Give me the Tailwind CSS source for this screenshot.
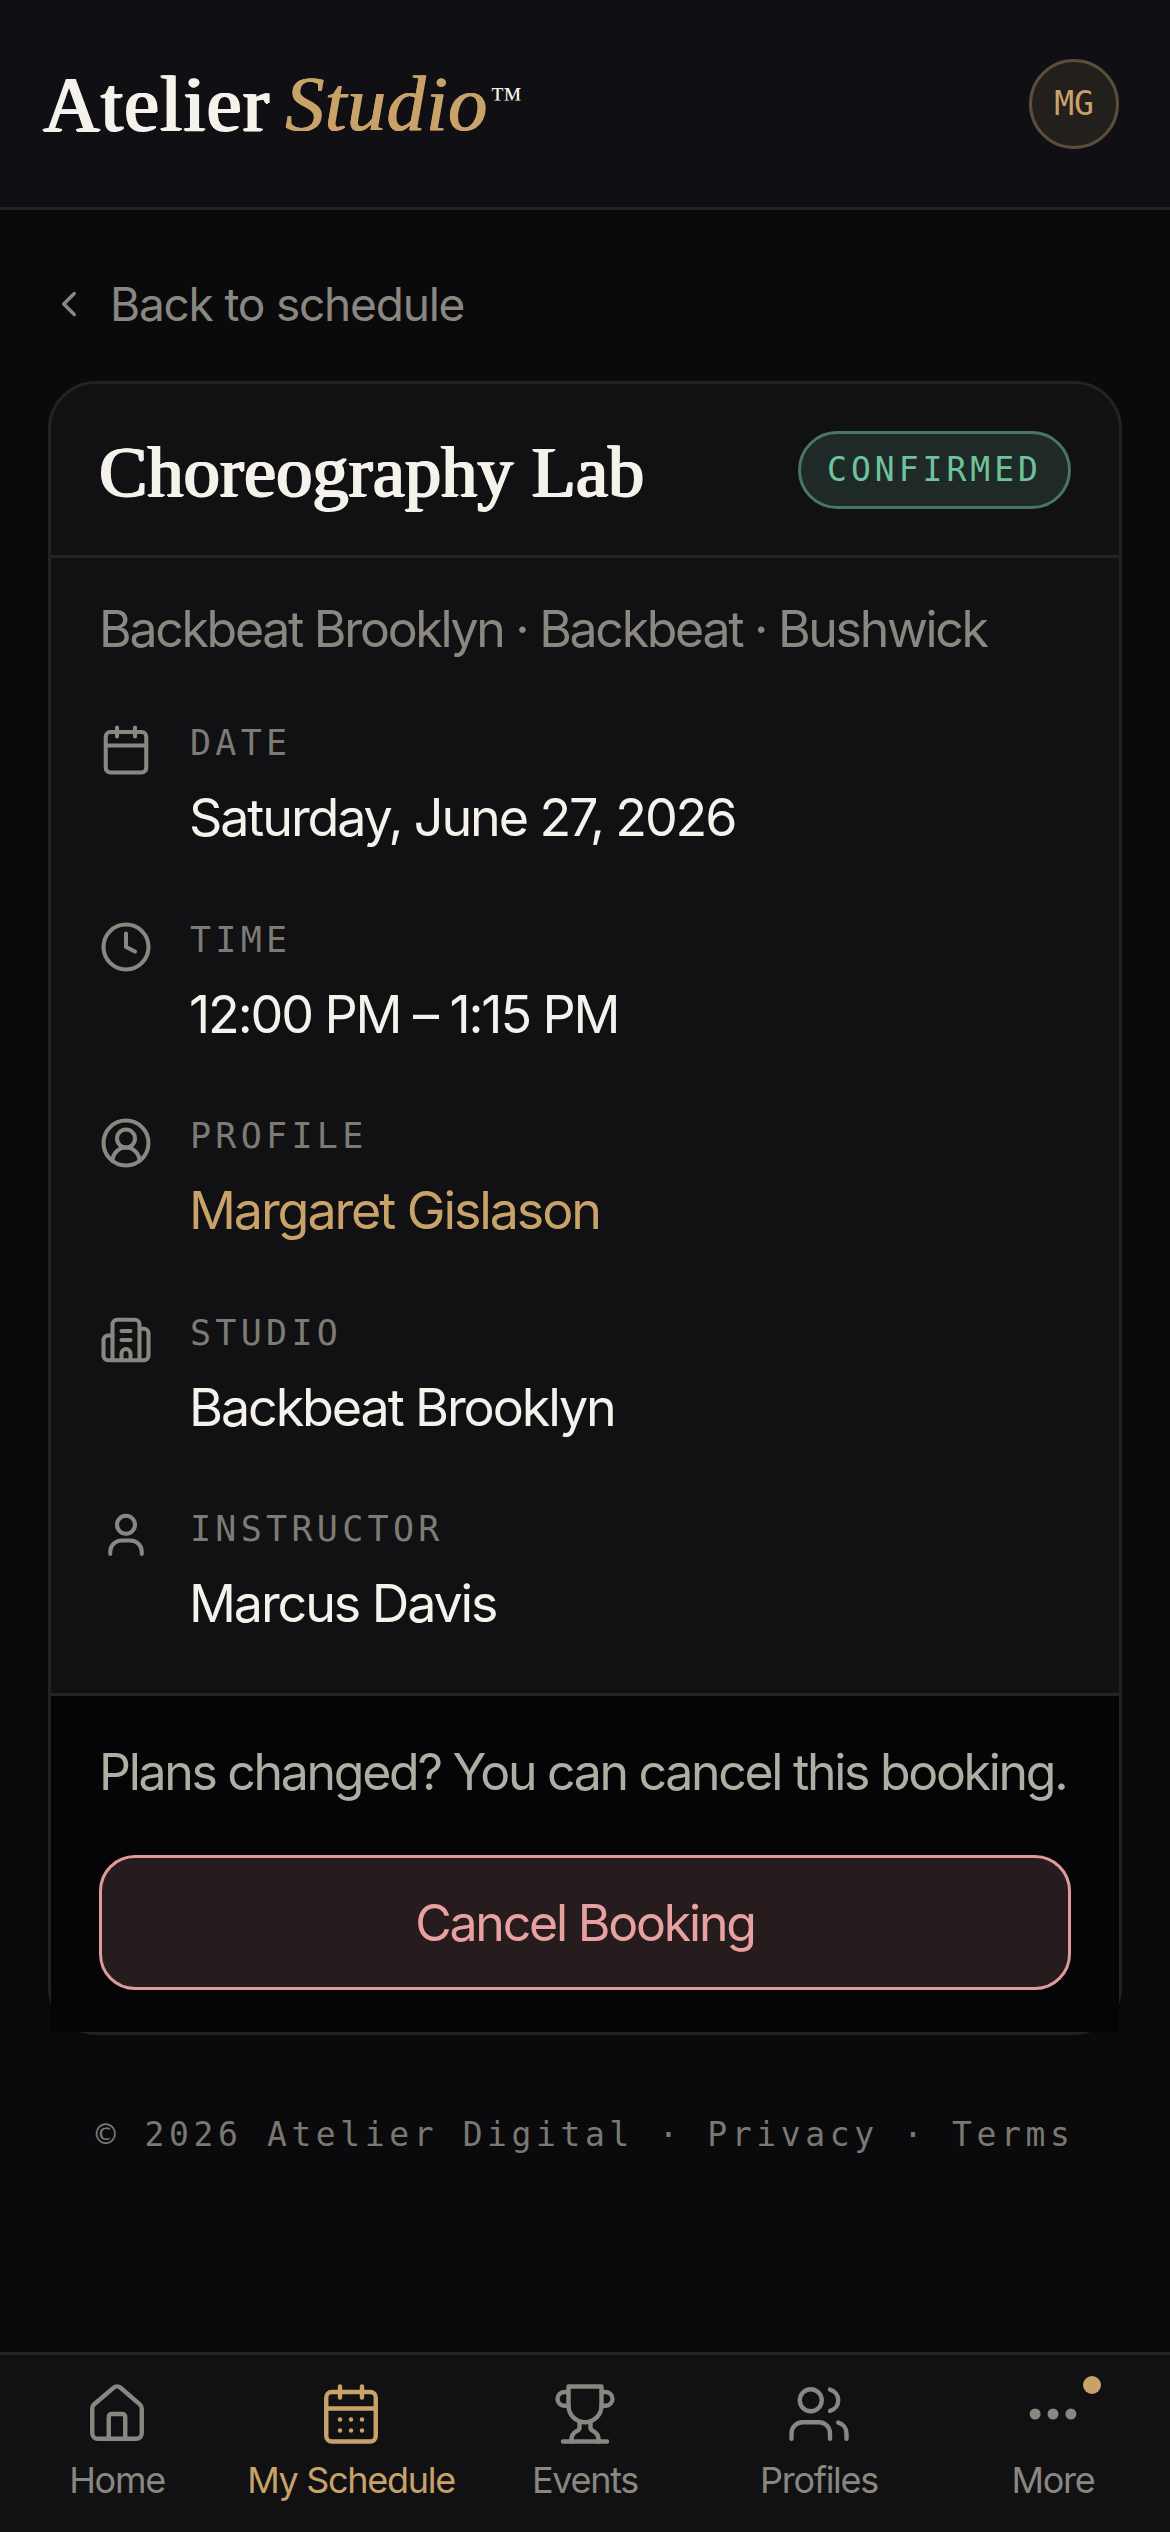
<!DOCTYPE html>
<html lang="en">
<head>
  <meta charset="UTF-8" />
  <title>Booking details</title>
  <script src="https://cdn.jsdelivr.net/npm/@tailwindcss/browser@4"></script>
</head>

<body class="w-[1170px] h-[2532px] overflow-hidden flex flex-col bg-[#0a0a0c] font-['Inter',sans-serif] text-[#f5f2ec]">
  <!-- top bar -->
  <header class="h-[210px] shrink-0 flex items-center justify-between pl-[43px] pr-[51px] bg-[#101014] border-b-[3px] border-[#232326]">
    <div class="flex items-start font-['Liberation_Serif',serif] text-[78px] leading-[80px]">
      <span class="tracking-[1.5px] [text-shadow:1.6px_0_0_currentColor,-1px_0_0_currentColor,0_0.5px_0_currentColor]">Atelier</span>
      <span class="ml-[15px] italic tracking-[0.5px] text-[#c9a26a] [text-shadow:1px_0_0_currentColor,-0.3px_0_0_currentColor]">Studio</span>
      <span class="ml-[3px] mt-[-6px] text-[32px]">™</span>
    </div>
    <div class="w-[90px] h-[90px] rounded-full flex items-center justify-center bg-[#221f1c] border-[3px] border-[#5c4e3b] font-['DejaVu_Sans_Mono',monospace] text-[33px] text-[#c9a26a]">MG</div>
  </header>

  <main class="flex-1 flex flex-col px-12">
    <a class="flex items-center h-[60px] mt-[64px] text-[46px] tracking-[-1.2px] text-[#8a8780]">
      <svg class="w-[42px] h-[42px] mr-[20px]" viewBox="0 0 24 24" fill="none" stroke="currentColor" stroke-width="2" stroke-linecap="round" stroke-linejoin="round"><path d="m15 18-6-6 6-6"/></svg>
      Back to schedule
    </a>

    <!-- booking card -->
    <section class="mt-[47px] rounded-[48px] border-[3px] border-[#232326] bg-[#111113]">
      <div class="h-[174px] flex items-center justify-between pl-[48px] pr-[48px] border-b-[3px] border-[#232326]">
        <h1 class="mt-[4px] font-['Liberation_Serif',serif] text-[72px] leading-[80px] tracking-[0.2px] [text-shadow:1.5px_0_0_currentColor,-0.9px_0_0_currentColor,0_0.5px_0_currentColor]">Choreography Lab</h1>
        <span class="h-[78px] w-[273px] flex items-center justify-center rounded-full bg-[#1f2a28] border-[3px] border-[#4a7563] font-['DejaVu_Sans_Mono',monospace] text-[33px] tracking-[4px] text-[#6fc39a]">CONFIRMED</span>
      </div>

      <div class="px-[48px] pt-[38px] pb-[52.5px]">
        <p class="text-[50px] leading-[66px] tracking-[-2.3px] text-[#8a8780] mb-[60px]">Backbeat Brooklyn · Backbeat · Bushwick</p>

        <div class="flex flex-col gap-[64.5px]">
          <div class="flex">
            <svg class="w-[54px] h-[54px] mt-[1px] mr-[36px] shrink-0 text-[#8a8780]" viewBox="0 0 24 24" fill="none" stroke="currentColor" stroke-width="1.8" stroke-linecap="round" stroke-linejoin="round"><path d="M8 2v4"/><path d="M16 2v4"/><rect x="3" y="4" width="18" height="18" rx="2"/><path d="M3 10h18"/></svg>
            <div>
              <div class="ml-[1px] font-['DejaVu_Sans_Mono',monospace] text-[35px] leading-[42px] tracking-[4.3px] text-[#7d7b75]">DATE</div>
              <div class="mt-[18px] text-[52px] leading-[72px] tracking-[-2.1px]">Saturday, June 27, 2026</div>
            </div>
          </div>
          <div class="flex">
            <svg class="w-[54px] h-[54px] mt-[1px] mr-[36px] shrink-0 text-[#8a8780]" viewBox="0 0 24 24" fill="none" stroke="currentColor" stroke-width="1.8" stroke-linecap="round" stroke-linejoin="round"><circle cx="12" cy="12" r="10"/><polyline points="12 6 12 12 16 14"/></svg>
            <div>
              <div class="ml-[1px] font-['DejaVu_Sans_Mono',monospace] text-[35px] leading-[42px] tracking-[4.3px] text-[#7d7b75]">TIME</div>
              <div class="mt-[18px] text-[52px] leading-[72px] tracking-[-2.1px]">12:00 PM – 1:15 PM</div>
            </div>
          </div>
          <div class="flex">
            <svg class="w-[54px] h-[54px] mt-[1px] mr-[36px] shrink-0 text-[#8a8780]" viewBox="0 0 24 24" fill="none" stroke="currentColor" stroke-width="1.8" stroke-linecap="round" stroke-linejoin="round"><path d="M18 20a6 6 0 0 0-12 0"/><circle cx="12" cy="10" r="4"/><circle cx="12" cy="12" r="10"/></svg>
            <div>
              <div class="ml-[1px] font-['DejaVu_Sans_Mono',monospace] text-[35px] leading-[42px] tracking-[4.3px] text-[#7d7b75]">PROFILE</div>
              <div class="mt-[18px] text-[52px] leading-[72px] tracking-[-2.1px] text-[#c9a26a]">Margaret Gislason</div>
            </div>
          </div>
          <div class="flex">
            <svg class="w-[54px] h-[54px] mt-[1px] mr-[36px] shrink-0 text-[#8a8780]" viewBox="0 0 24 24" fill="none" stroke="currentColor" stroke-width="1.8" stroke-linecap="round" stroke-linejoin="round"><path d="M10 12h4"/><path d="M10 8h4"/><path d="M14 21v-3a2 2 0 0 0-4 0v3"/><path d="M6 10H4a2 2 0 0 0-2 2v7a2 2 0 0 0 2 2h16a2 2 0 0 0 2-2V9a2 2 0 0 0-2-2h-2"/><path d="M6 21V5a2 2 0 0 1 2-2h8a2 2 0 0 1 2 2v16"/></svg>
            <div>
              <div class="ml-[1px] font-['DejaVu_Sans_Mono',monospace] text-[35px] leading-[42px] tracking-[4.3px] text-[#7d7b75]">STUDIO</div>
              <div class="mt-[18px] text-[52px] leading-[72px] tracking-[-2.1px]">Backbeat Brooklyn</div>
            </div>
          </div>
          <div class="flex">
            <svg class="w-[54px] h-[54px] mt-[1px] mr-[36px] shrink-0 text-[#8a8780]" viewBox="0 0 24 24" fill="none" stroke="currentColor" stroke-width="1.8" stroke-linecap="round" stroke-linejoin="round"><path d="M5 20v-1a5 5 0 0 1 5-5h4a5 5 0 0 1 5 5v1"/><circle cx="12" cy="7" r="4"/></svg>
            <div>
              <div class="ml-[1px] font-['DejaVu_Sans_Mono',monospace] text-[35px] leading-[42px] tracking-[4.3px] text-[#7d7b75]">INSTRUCTOR</div>
              <div class="mt-[18px] text-[52px] leading-[72px] tracking-[-2.1px]">Marcus Davis</div>
            </div>
          </div>
        </div>
      </div>

      <div class="px-[48px] pt-[43px] pb-[42px] bg-[#050507] border-t-[3px] border-[#232326]">
        <p class="text-[50px] leading-[66px] tracking-[-2.3px] text-[#b0ada3]">Plans changed? You can cancel this booking.</p>
        <button class="mt-[50px] pt-[3px] w-full h-[135px] rounded-[36px] bg-[#261c1e] border-[3px] border-[#e09a9a] text-[50px] tracking-[-2.2px] text-[#e8a0a0]">Cancel Booking</button>
      </div>
    </section>

    <footer class="mt-[73px] text-center font-['DejaVu_Sans_Mono',monospace] text-[33px] leading-[54px] tracking-[4.6px] text-[#7a7872] whitespace-nowrap">© 2026 Atelier Digital · Privacy · Terms</footer>
  </main>

  <!-- bottom nav -->
  <nav class="h-[180px] shrink-0 grid grid-cols-5 bg-[#111114] border-t-[3px] border-[#232326] text-[36px] tracking-[-1.3px] text-[#8a8780]">
    <a class="flex flex-col items-center pt-[26px]">
      <svg class="w-[66px] h-[66px]" viewBox="0 0 24 24" fill="none" stroke="currentColor" stroke-width="1.6" stroke-linecap="round" stroke-linejoin="round"><path d="M15 21v-8a1 1 0 0 0-1-1h-4a1 1 0 0 0-1 1v8"/><path d="M3 10a2 2 0 0 1 .709-1.528l7-5.999a2 2 0 0 1 2.582 0l7 5.999A2 2 0 0 1 21 10v9a2 2 0 0 1-2 2H5a2 2 0 0 1-2-2z"/></svg>
      <span class="mt-[11px] leading-[44px]">Home</span>
    </a>
    <a class="flex flex-col items-center pt-[26px] text-[#c9a26a]">
      <svg class="w-[66px] h-[66px]" viewBox="0 0 24 24" fill="none" stroke="currentColor" stroke-width="1.6" stroke-linecap="round" stroke-linejoin="round"><path d="M8 2v4"/><path d="M16 2v4"/><rect x="3" y="4" width="18" height="18" rx="2"/><path d="M3 10h18"/><path d="M8 14h.01"/><path d="M12 14h.01"/><path d="M16 14h.01"/><path d="M8 18h.01"/><path d="M12 18h.01"/><path d="M16 18h.01"/></svg>
      <span class="mt-[11px] leading-[44px]">My Schedule</span>
    </a>
    <a class="flex flex-col items-center pt-[26px]">
      <svg class="w-[66px] h-[66px]" viewBox="0 0 24 24" fill="none" stroke="currentColor" stroke-width="1.6" stroke-linecap="round" stroke-linejoin="round"><path d="M6 9H4.5a2.5 2.5 0 0 1 0-5H6"/><path d="M18 9h1.5a2.5 2.5 0 0 0 0-5H18"/><path d="M4 22h16"/><path d="M10 14.66V17c0 .55-.47.98-.97 1.21C7.85 18.75 7 20.24 7 22"/><path d="M14 14.66V17c0 .55.47.98.97 1.21C16.15 18.75 17 20.24 17 22"/><path d="M18 2H6v7a6 6 0 0 0 12 0V2Z"/></svg>
      <span class="mt-[11px] leading-[44px]">Events</span>
    </a>
    <a class="flex flex-col items-center pt-[26px]">
      <svg class="w-[66px] h-[66px]" viewBox="0 0 24 24" fill="none" stroke="currentColor" stroke-width="1.6" stroke-linecap="round" stroke-linejoin="round"><path d="M16 21v-2a4 4 0 0 0-4-4H6a4 4 0 0 0-4 4v2"/><circle cx="9" cy="7" r="4"/><path d="M22 21v-2a4 4 0 0 0-3-3.87"/><path d="M16 3.13a4 4 0 0 1 0 7.75"/></svg>
      <span class="mt-[11px] leading-[44px]">Profiles</span>
    </a>
    <a class="relative flex flex-col items-center pt-[26px]">
      <svg class="w-[66px] h-[66px]" viewBox="0 0 24 24" fill="currentColor"><circle cx="5.5" cy="12" r="2"/><circle cx="12" cy="12" r="2"/><circle cx="18.5" cy="12" r="2"/></svg>
      <span class="mt-[11px] leading-[44px]">More</span>
      <span class="absolute left-[147px] top-[21px] w-[18px] h-[18px] rounded-full bg-[#c9a26a]"></span>
    </a>
  </nav>
</body>
</html>
